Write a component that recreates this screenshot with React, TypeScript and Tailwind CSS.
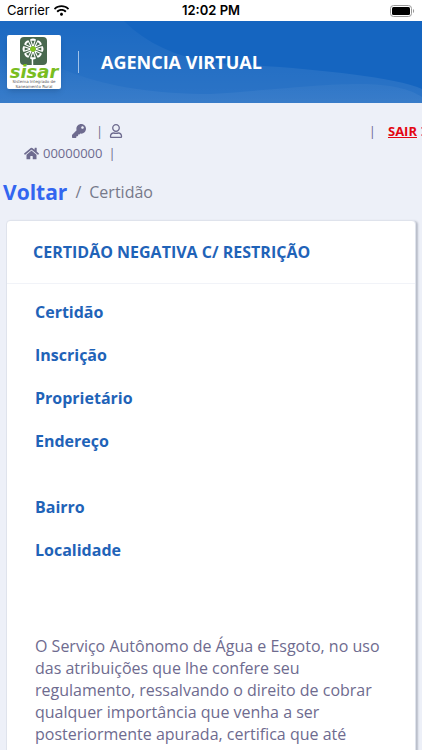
import type { ReactNode } from "react";
import { FaHome, FaKey, FaRegUser, FaTimes, FaWifi } from "react-icons/fa";

const fields = ["Certidão", "Inscrição", "Proprietário", "Endereço"];
const placeFields = ["Bairro", "Localidade"];

export default function App() {
  return (
    <div className="min-h-screen bg-[#edf0f8] font-['Open_Sans',sans-serif] text-[#6e6b8f]">
      <StatusBar />
      <Header />

      <nav className="px-6 pt-[17px] text-[13px] leading-[22px]">
        <div className="flex items-center justify-between">
          <div className="flex items-center gap-[6px] pl-12">
            <FaKey size={14} />
            <span className="pl-1">|</span>
            <FaRegUser size={14} />
          </div>
          <div className="-mr-6 flex items-center gap-3 overflow-hidden whitespace-nowrap">
            <span>|</span>
            <a href="#sair" className="-mr-3 flex items-center gap-[2px] font-bold text-[#e30613] underline">
              SAIR
              <FaTimes size={15} />
            </a>
          </div>
        </div>
        <div className="flex items-center gap-1">
          <FaHome size={15} />
          <span>00000000</span>
          <span className="pl-[2px]">|</span>
        </div>
      </nav>

      <div className="flex items-center gap-2 px-[3px] pt-3 leading-8">
        <a href="#voltar" className="text-[21px] font-bold text-[#3366f0]">Voltar</a>
        <span className="text-base text-[#76798a]">/</span>
        <span className="text-base text-[#76798a]">Certidão</span>
      </div>

      <main className="mx-[6px] mt-3 rounded-sm border border-[#dfe3ec] bg-white shadow-[2px_1px_2px_#b9bdc9]">
        <h2 className="border-b border-[#f1f3f8] px-[26px] py-5 text-base leading-[22px] font-bold text-[#1f63b8]">
          CERTIDÃO NEGATIVA C/ RESTRIÇÃO
        </h2>
        <div className="px-7 pt-[17px] pb-7 text-base leading-[22px]">
          <FieldList>
            {fields.map((f) => <dt key={f}>{f}</dt>)}
          </FieldList>
          <div className="h-11" />
          <FieldList>
            {placeFields.map((f) => <dt key={f}>{f}</dt>)}
          </FieldList>
          <p className="pt-[74px]">
            O Serviço Autônomo de Água e Esgoto, no uso das atribuições que lhe confere seu regulamento,
            ressalvando o direito de cobrar qualquer importância que venha a ser posteriormente apurada,
            certifica que até quando o imóvel acima identificado
          </p>
        </div>
      </main>
    </div>
  );
}

function FieldList({ children }: { children: ReactNode }) {
  return <dl className="flex flex-col gap-[21px] font-bold text-[#1f63b8]">{children}</dl>;
}

function StatusBar() {
  return (
    <div className="grid h-[21px] grid-cols-3 items-center bg-white px-[7px] font-['Inter',sans-serif] text-[13px] text-black">
      <div className="flex items-center gap-1">
        <span>Carrier</span>
        <FaWifi size={15} />
      </div>
      <span className="text-center font-semibold">12:02 PM</span>
      <svg className="justify-self-end" width="25" height="12" viewBox="0 0 25 12">
        <rect x="0.5" y="0.5" width="21" height="11" rx="3" fill="none" stroke="#999" />
        <rect x="2" y="2" width="18" height="8" rx="1.5" />
        <path d="M23 4v4c1.500-.5 1.500-3.500 0-4z" fill="#999" />
      </svg>
    </div>
  );
}

function Header() {
  return (
    <header className="relative flex h-[82px] items-center gap-[17px] overflow-hidden bg-[#1565c0] px-[7px]">
      <svg className="absolute inset-0 h-full w-full" viewBox="0 0 422 82" preserveAspectRatio="none">
        <defs>
          <linearGradient id="wave" gradientUnits="userSpaceOnUse" x1="0" y1="0" x2="0" y2="82">
            <stop offset="0" stopColor="#fff" stopOpacity="0.03" />
            <stop offset="1" stopColor="#fff" stopOpacity="0.1" />
          </linearGradient>
          <linearGradient id="swell" gradientUnits="userSpaceOnUse" x1="0" y1="30" x2="0" y2="82">
            <stop offset="0" stopColor="#fff" stopOpacity="0" />
            <stop offset="1" stopColor="#fff" stopOpacity="0.06" />
          </linearGradient>
        </defs>
        <path d="M0 0H124C146 22 176 36 214 42C290 46 390 54 422 68V82H0z" fill="url(#wave)" />
        <path d="M0 0C30 44 100 73 211 73C285 68 320 63 360 63C390 63 410 68 422 76V82H0z" fill="url(#swell)" />
      </svg>
      <Logo />
      <div className="relative h-[22px] w-px bg-[#9fc2ea]" />
      <h1 className="relative pl-[5px] text-lg font-bold text-white">AGENCIA VIRTUAL</h1>
    </header>
  );
}

function Logo() {
  return (
    <svg className="relative shrink-0 rounded-xs shadow-md" width="54" height="54" viewBox="0 0 54 54">
      <rect width="54" height="54" fill="#fff" />
      <rect x="13" y="2" width="27" height="28" rx="4" fill="#49694f" />
      <path d="M26 17Q25 23 25.500 30" fill="none" stroke="#fff" strokeWidth="1.500" />
      {[0, 45, 90, 135, 180, 225, 270, 315].map((a) => (
        <g key={a} transform={`rotate(${a} 26 14)`}>
          <path d="M25.200 11.500L23 4.500Q26 2.500 29 4.500L26.800 11.500z" fill="#fff" />
          <path d="M26 10L24.400 5.700H27.600z" fill="#49694f" />
        </g>
      ))}
      <circle cx="26" cy="14" r="2.800" fill="#83c51d" />
      <text x="27" y="43" textAnchor="middle" fontSize="18" fontWeight="700" fontStyle="italic" fontFamily="DejaVu Sans, sans-serif" fill="#79bd20">sisar</text>
      <text x="27" y="48" textAnchor="middle" fontSize="4" fontFamily="DejaVu Sans, sans-serif" fill="#555">Sistema Integrado de</text>
      <text x="27" y="53" textAnchor="middle" fontSize="4" fontFamily="DejaVu Sans, sans-serif" fill="#555">Saneamento Rural</text>
    </svg>
  );
}
